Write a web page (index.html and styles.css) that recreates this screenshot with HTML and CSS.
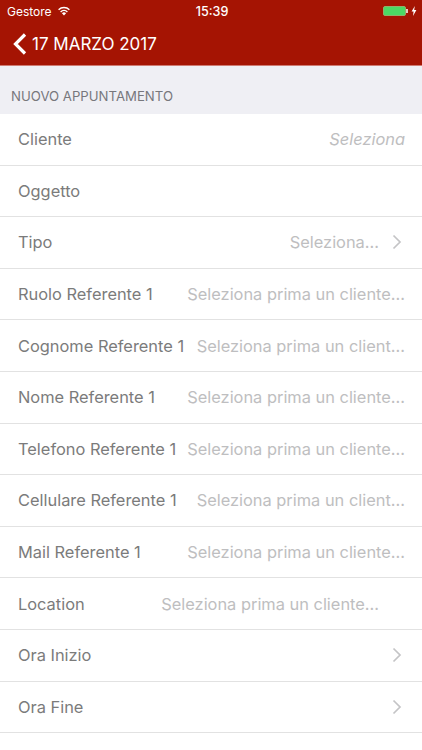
FILE: index.html
```html
<!DOCTYPE html>
<html lang="it">
<head>
  <meta charset="UTF-8">
  <title>Nuovo appuntamento</title>
  <link rel="stylesheet" href="styles.css">
</head>
<body>
<div class="header">
  <div class="status">
    <div class="status-left">
      <span>Gestore</span>
      <svg class="wifi" width="14" height="10" viewBox="0 0 14 10">
        <path d="M7 9.600 4.900 7.300a3 3 0 0 1 4.200 0z" fill="#fff"/>
        <path d="M3.600 5.900a4.900 4.900 0 0 1 6.800 0M1.600 3.700a7.800 7.800 0 0 1 10.800 0" fill="none" stroke="#fff" stroke-width="1.400"/>
      </svg>
    </div>
    <span class="time">15:39</span>
    <div class="status-right">
      <span class="battery"></span>
      <span class="battery-tip"></span>
      <svg width="6" height="10" viewBox="0 0 6 10"><path d="M3.800 0 .6 5.600h2L2 10l3.400-6H3.200z" fill="#fff"/></svg>
    </div>
  </div>
  <div class="nav">
    <svg width="14" height="22" viewBox="0 0 14 22"><path d="M12 1.500 2.500 11l9.500 9.500" fill="none" stroke="#fff" stroke-width="3.200"/></svg>
    <span>17 MARZO 2017</span>
  </div>
</div>
<div class="section-title">NUOVO APPUNTAMENTO</div>
<div class="list">
  <div class="row"><span class="label">Cliente</span><span class="value italic">Seleziona</span></div>
  <div class="row"><span class="label">Oggetto</span></div>
  <div class="row"><span class="label">Tipo</span><span class="value">Seleziona...</span>
    <svg class="chevron" width="10" height="16" viewBox="0 0 10 16"><path d="M1.500 1.500 8 8l-6.500 6.500" fill="none" stroke="#c4c4c6" stroke-width="1.700"/></svg></div>
  <div class="row"><span class="label">Ruolo Referente 1</span><span class="value">Seleziona prima un cliente...</span></div>
  <div class="row"><span class="label">Cognome Referente 1</span><span class="value">Seleziona prima un client...</span></div>
  <div class="row"><span class="label">Nome Referente 1</span><span class="value">Seleziona prima un cliente...</span></div>
  <div class="row"><span class="label">Telefono Referente 1</span><span class="value">Seleziona prima un cliente...</span></div>
  <div class="row"><span class="label">Cellulare Referente 1</span><span class="value">Seleziona prima un client...</span></div>
  <div class="row"><span class="label">Mail Referente 1</span><span class="value">Seleziona prima un cliente...</span></div>
  <div class="row"><span class="label">Location</span><span class="value location">Seleziona prima un cliente...</span></div>
  <div class="row"><span class="label">Ora Inizio</span>
    <svg class="chevron" width="10" height="16" viewBox="0 0 10 16"><path d="M1.500 1.500 8 8l-6.500 6.500" fill="none" stroke="#c4c4c6" stroke-width="1.700"/></svg></div>
  <div class="row"><span class="label">Ora Fine</span>
    <svg class="chevron" width="10" height="16" viewBox="0 0 10 16"><path d="M1.500 1.500 8 8l-6.500 6.500" fill="none" stroke="#c4c4c6" stroke-width="1.700"/></svg></div>
</div>
</body>
</html>
```

FILE: styles.css
```css
html, body {
  margin: 0;
  height: 750px;
  overflow: hidden;
  background: #fff;
  font-family: Inter, "Liberation Sans", sans-serif;
}

.header {
  height: 65px;
  background: #a51403;
  color: #fff;
  border-bottom: 1px solid #cf7b72;
}

.status {
  height: 22px;
  display: flex;
  align-items: center;
  justify-content: space-between;
  padding: 0 5px 0 7px;
  font-size: 12px;
}

.status-left, .status-right {
  width: 90px;
  display: flex;
  align-items: center;
}

.status-left {
  gap: 5px;
}

.status-right {
  justify-content: flex-end;
}

.time {
  font-size: 12.6px;
  font-weight: 500;
}

.battery {
  width: 23px;
  height: 10px;
  box-sizing: border-box;
  border: 1px solid #8fb06a;
  border-radius: 2px;
  background: #4cd964;
}

.battery-tip {
  width: 2px;
  height: 4px;
  margin: 0 3px 0 0;
  background: #e6c9c4;
}

.nav {
  height: 43px;
  display: flex;
  align-items: center;
  gap: 5px;
  padding-left: 13px;
  font-size: 17px;
}

.section-title {
  height: 48px;
  box-sizing: border-box;
  padding: 22px 0 0 11px;
  background: #efeff4;
  color: #77777c;
  font-size: 13.2px;
  line-height: 16px;
}

.row {
  height: 51.6px;
  box-sizing: border-box;
  display: flex;
  align-items: center;
  padding: 0 17px 0 18px;
  border-bottom: 1px solid #e2e2e2;
  white-space: nowrap;
}

.label {
  color: #7b7b7b;
  font-size: 16.4px;
}

.value {
  margin-left: auto;
  color: #bebec0;
  font-size: 16.4px;
}

.italic {
  font-style: italic;
}

.location {
  margin-right: 26px;
}

.chevron {
  margin-left: auto;
  margin-right: 3px;
  flex-shrink: 0;
}

.value + .chevron {
  margin-left: 13px;
}
```
